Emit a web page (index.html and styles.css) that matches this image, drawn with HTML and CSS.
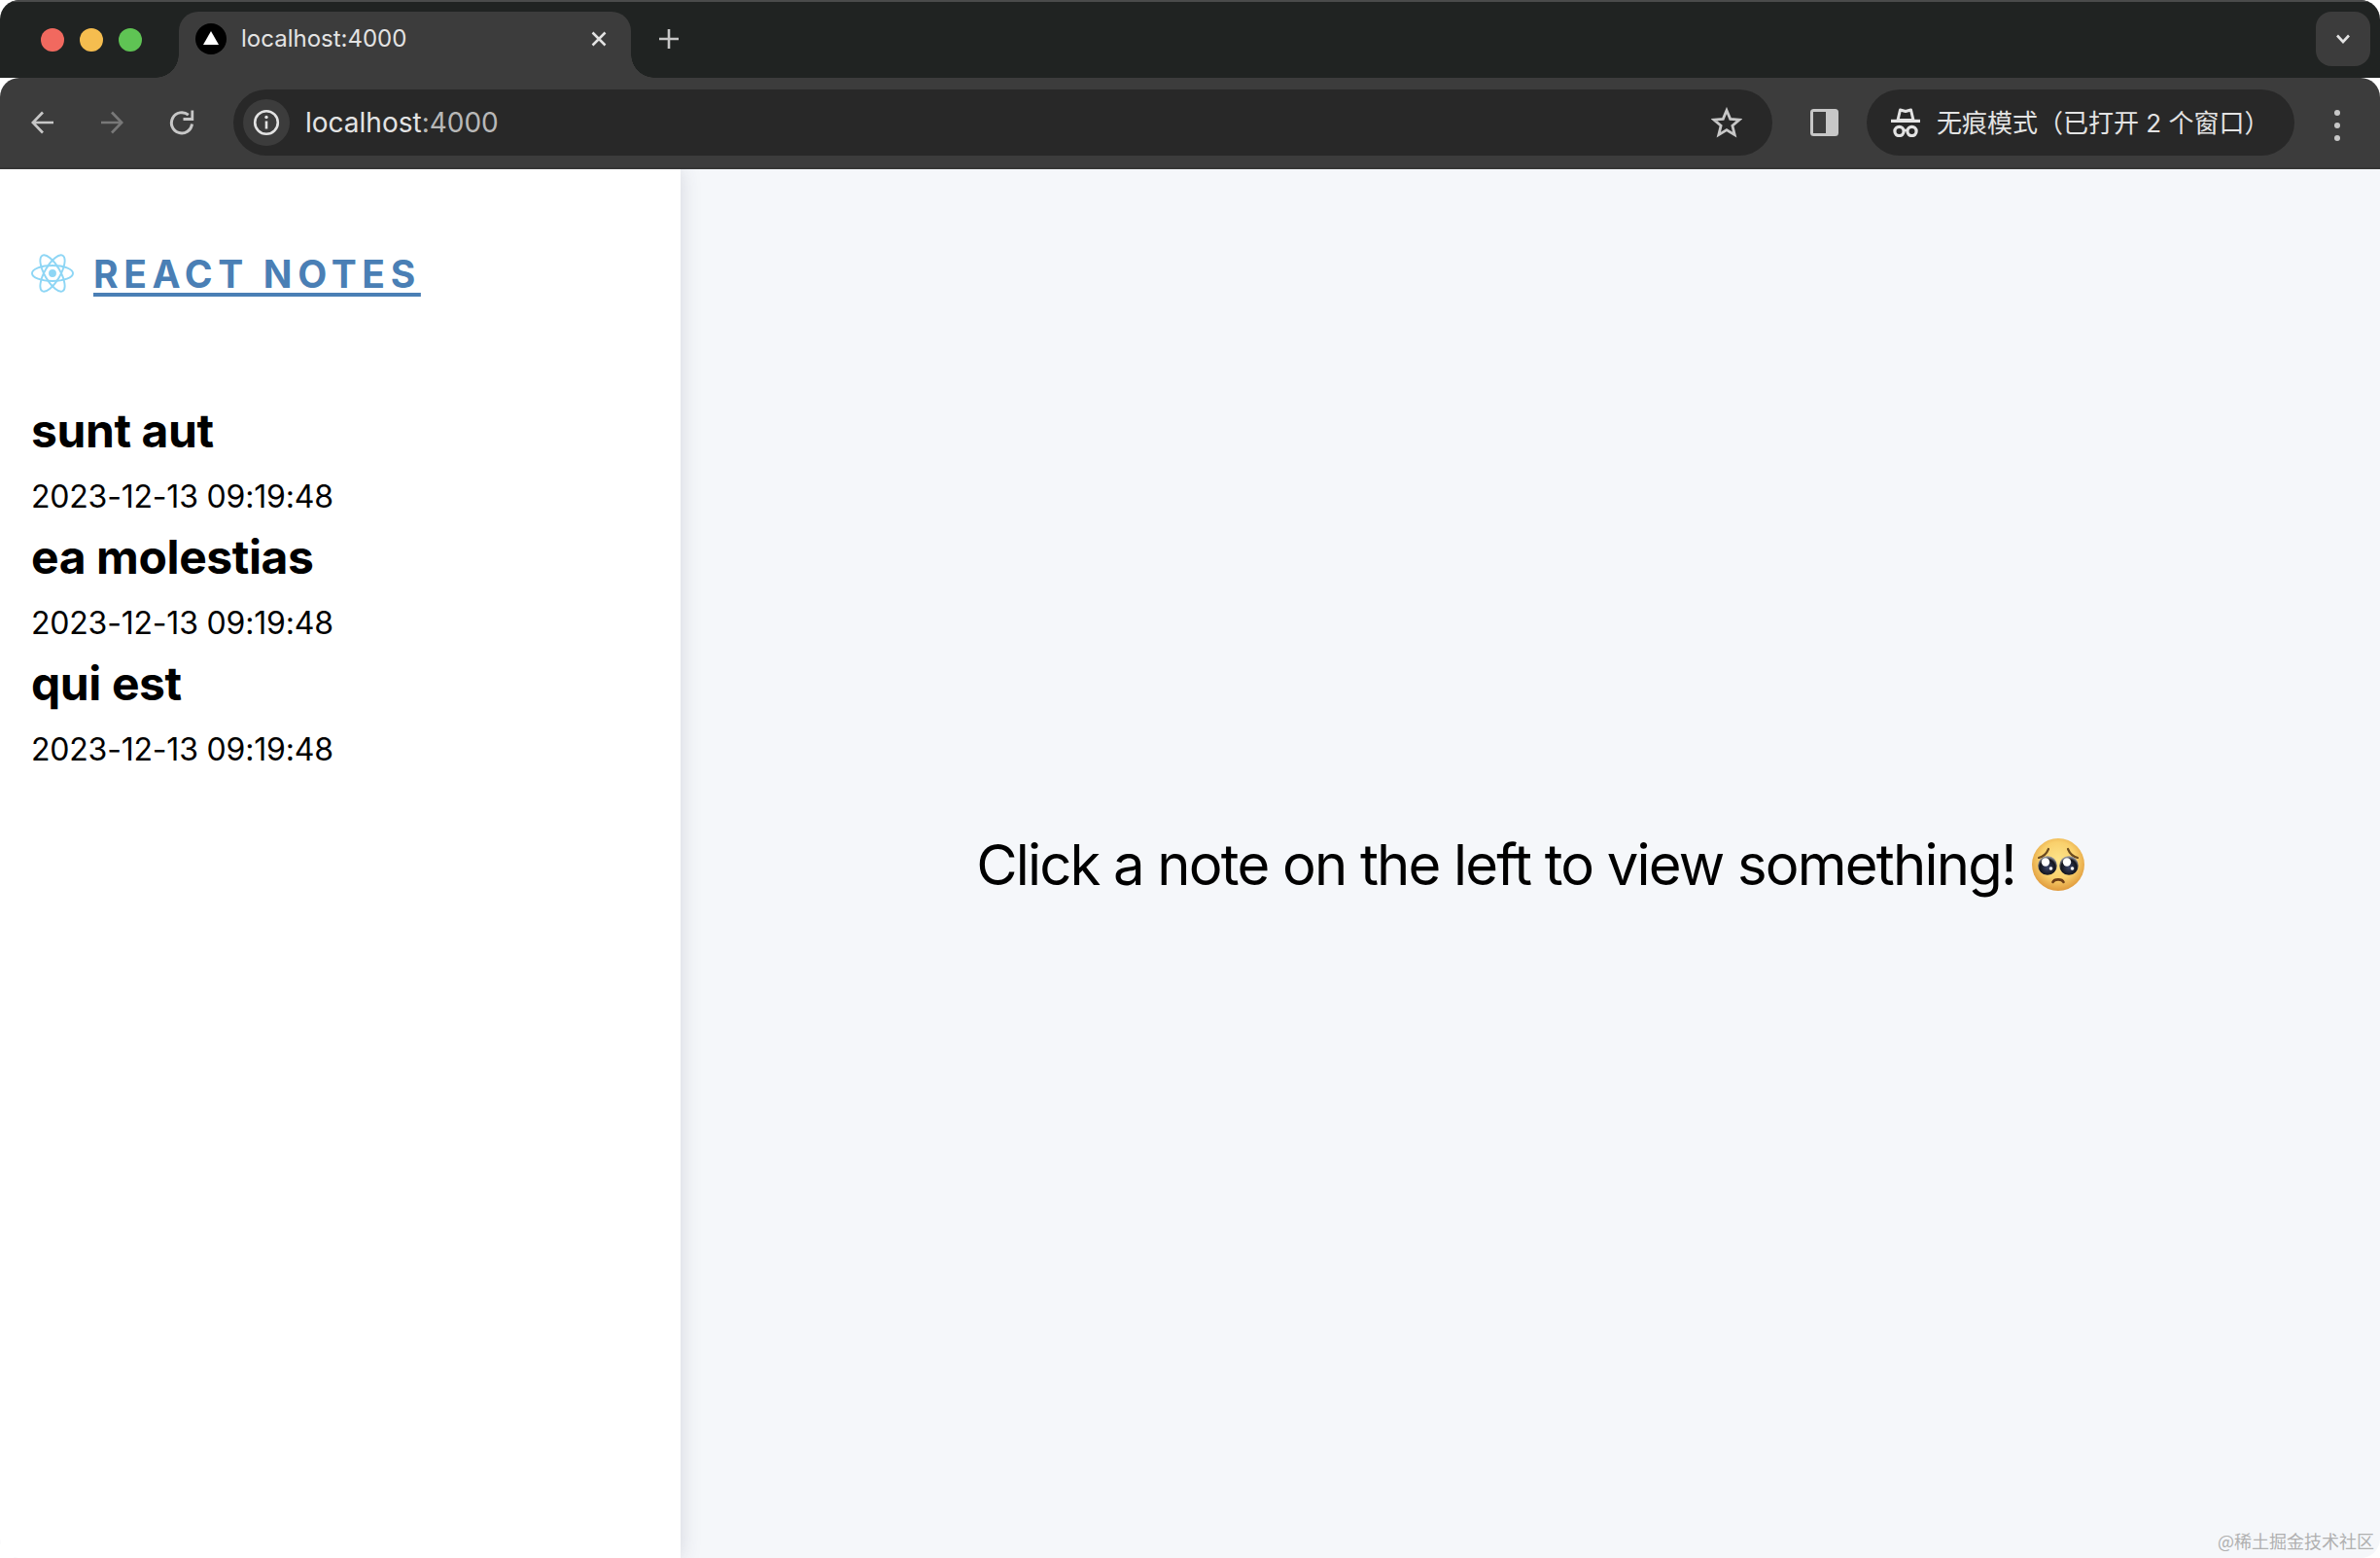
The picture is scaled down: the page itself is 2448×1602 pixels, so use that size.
FILE: index.html
```html
<!DOCTYPE html>
<html lang="en">
<head>
<meta charset="utf-8">
<title>React Notes</title>
<link rel="stylesheet" href="styles.css">
</head>
<body>
<div class="window">
  <header class="tabstrip">
    <div class="lights">
      <span class="light light-red"></span>
      <span class="light light-yellow"></span>
      <span class="light light-green"></span>
    </div>
    <div class="tab">
      <svg class="favicon" viewBox="0 0 32 32"><circle cx="16" cy="16" r="16" fill="#000"/><path d="M16 8 24 22H8Z" fill="#fff"/></svg>
      <span class="tab-title">localhost:4000</span>
      <svg class="tab-close" viewBox="0 0 16 16"><path d="M1.500 1.500 14.500 14.500M14.500 1.500 1.500 14.500" stroke="#e3e3e3" stroke-width="2.500" fill="none"/></svg>
    </div>
    <svg class="newtab" viewBox="0 0 20 20"><path d="M10 0V20M0 10H20" stroke="#c7c7c7" stroke-width="2.600" fill="none"/></svg>
    <div class="tabsearch">
      <svg class="chevron" viewBox="0 0 16 12"><path d="M2 2.500 8 9 14 2.500" stroke="#e3e3e3" stroke-width="2.600" fill="none"/></svg>
    </div>
  </header>
  <nav class="toolbar">
    <svg class="navicon" viewBox="0 0 24 24"><path d="M23 12H2M12 1.500 1.800 12 12 22.500" stroke="#c7c7c7" stroke-width="2.700" fill="none"/></svg>
    <svg class="navicon navicon-off" viewBox="0 0 24 24"><path d="M1 12H22M12 1.500 22.200 12 12 22.500" stroke="#787878" stroke-width="2.700" fill="none"/></svg>
    <svg class="navicon navicon-reload" viewBox="0 0 26 26"><path d="M23.500 14.500A10.600 10.600 0 1 1 19.800 5.200" stroke="#c7c7c7" stroke-width="3" fill="none"/><path d="M23.800 .500V9.500H14.500" stroke="#c7c7c7" stroke-width="2.800" fill="none"/></svg>
    <div class="omnibox">
      <span class="site-info">
        <svg class="info-icon" viewBox="0 0 28 28"><circle cx="14" cy="14" r="11.800" stroke="#e3e3e3" stroke-width="2.600" fill="none"/><path d="M14 12.500V20.500" stroke="#e3e3e3" stroke-width="2.600"/><circle cx="14" cy="8.500" r="1.700" fill="#e3e3e3"/></svg>
      </span>
      <span class="url">localhost<span class="url-port">:4000</span></span>
      <svg class="star" viewBox="0 0 32 32"><path d="M16 3.500 19.700 12.400 29.200 13.100 21.900 19.300 24.200 28.600 16 23.600 7.800 28.600 10.100 19.300 2.800 13.100 12.300 12.400Z" stroke="#c7c7c7" stroke-width="2.800" fill="none"/></svg>
    </div>
    <svg class="sidepanel" viewBox="0 0 29 28"><rect width="29" height="28" rx="3.500" fill="#c7c7c7"/><rect x="3" y="3" width="13" height="22" fill="#3c3c3c"/></svg>
    <div class="incognito">
      <svg class="hat" viewBox="0 0 30 30"><path d="M7 12.500 9.500 2 15 3.500 20.500 2 23 12.500Z" stroke="#e3e3e3" stroke-width="3" stroke-linejoin="round" fill="none"/><path d="M0 11.800H30V15H0Z" fill="#e3e3e3"/><circle cx="8.500" cy="24" r="4.600" stroke="#e3e3e3" stroke-width="3.200" fill="none"/><circle cx="21.500" cy="24" r="4.600" stroke="#e3e3e3" stroke-width="3.200" fill="none"/><path d="M12 23H18" stroke="#e3e3e3" stroke-width="2.400"/></svg>
      <span class="incognito-label">无痕模式（已打开 2 个窗口）</span>
    </div>
    <div class="menu"><i></i><i></i><i></i></div>
  </nav>
  <div class="app">
    <aside class="sidebar">
      <div class="brand">
        <svg class="logo" viewBox="-11.500 -10.230 23 20.460"><circle r="2.050" fill="#8ed6f5"/><g stroke="#8ed6f5" stroke-width="1" fill="none"><ellipse rx="11" ry="4.200"/><ellipse rx="11" ry="4.200" transform="rotate(60)"/><ellipse rx="11" ry="4.200" transform="rotate(120)"/></g></svg>
        <a class="brand-link" href="#">REACT NOTES</a>
      </div>
      <ul class="notes">
        <li class="note"><h2 class="note-title">sunt aut</h2><p class="note-date">2023-12-13 09:19:48</p></li>
        <li class="note"><h2 class="note-title">ea molestias</h2><p class="note-date">2023-12-13 09:19:48</p></li>
        <li class="note"><h2 class="note-title">qui est</h2><p class="note-date">2023-12-13 09:19:48</p></li>
      </ul>
    </aside>
    <main class="content">
      <p class="placeholder">Click a note on the left to view something!
        <svg class="emoji" viewBox="0 0 54 54">
          <defs>
            <radialGradient id="face" cx="50%" cy="42%" r="58%"><stop offset="0" stop-color="#fde58c"/><stop offset=".6" stop-color="#f9d06c"/><stop offset="1" stop-color="#e09a3c"/></radialGradient>
            <radialGradient id="eye" cx="50%" cy="60%" r="55%"><stop offset="0" stop-color="#3a4468"/><stop offset=".75" stop-color="#12141c"/><stop offset="1" stop-color="#8d8f98"/></radialGradient>
          </defs>
          <circle cx="27" cy="27" r="27" fill="url(#face)"/>
          <path d="M7 20C11 19 15 16 17 11M47 20C43 19 39 16 37 11" stroke="#6b4a1f" stroke-width="2.200" fill="none" stroke-linecap="round"/>
          <circle cx="16" cy="28" r="9.800" fill="url(#eye)"/>
          <circle cx="38" cy="28" r="9.800" fill="url(#eye)"/>
          <circle cx="14" cy="24.500" r="4.200" fill="#fff"/><circle cx="36" cy="24.500" r="4.200" fill="#fff"/>
          <circle cx="19.500" cy="31" r="1.800" fill="#fff"/><circle cx="41.500" cy="31" r="1.800" fill="#fff"/>
          <path d="M21.500 45C23 41.500 31 41.500 32.500 45" stroke="#6b3c16" stroke-width="2.600" fill="none" stroke-linecap="round"/>
        </svg>
      </p>
      <span class="watermark">@稀土掘金技术社区</span>
    </main>
  </div>
</div>
</body>
</html>
```

FILE: styles.css
```css
* { box-sizing: border-box; }
html, body { margin: 0; padding: 0; background: #fff; }
body { width: 2448px; height: 1602px; overflow: hidden; font-family: Inter, "Noto Sans CJK SC", sans-serif; }
.window { height: 1602px; display: flex; flex-direction: column; border-radius: 20px; overflow: hidden; }

/* Tab strip */
.tabstrip { height: 80px; flex: none; background: #202322; border-top: 2px solid #4a4b4b; padding-top: 10px; display: flex; align-items: flex-start; }
.lights { display: flex; gap: 16px; margin: 17px 0 0 42px; }
.light { width: 24px; height: 24px; border-radius: 50%; }
.light-red { background: #f1695f; }
.light-yellow { background: #f5bd4f; }
.light-green { background: #5fc454; }
.tab { position: relative; width: 465px; height: 68px; margin-left: 38px; background: #3c3c3c; border-radius: 20px 20px 0 0; display: flex; align-items: center; padding: 0 0 12px 17px; }
.tab::before, .tab::after { content: ""; position: absolute; bottom: 0; width: 24px; height: 24px; }
.tab::before { left: -24px; background: radial-gradient(circle at 0 0, #202322 23.500px, #3c3c3c 24px); }
.tab::after { right: -24px; background: radial-gradient(circle at 100% 0, #202322 23.500px, #3c3c3c 24px); }
.favicon { width: 32px; height: 32px; flex: none; }
.tab-title { margin-left: 15px; color: #e3e3e3; font-size: 24px; line-height: 32px; }
.tab-close { width: 16px; height: 16px; margin-left: auto; margin-right: 25px; }
.newtab { width: 20px; height: 20px; margin: 18px 0 0 29px; }
.tabsearch { width: 56px; height: 56px; margin: 0 10px 0 auto; background: #3c3c3c; border-radius: 16px; display: flex; align-items: center; justify-content: center; }
.chevron { width: 16px; height: 12px; }

/* Toolbar */
.toolbar { height: 94px; flex: none; background: #3c3c3c; border-radius: 20px 20px 0 0; border-bottom: 2px solid #363636; display: flex; align-items: flex-start; padding: 12px 0 0 32px; position: relative; z-index: 2; }
.navicon { width: 24px; height: 24px; flex: none; margin-top: 22px; margin-right: 47px; }
.navicon-off { margin-right: 47px; }
.navicon-reload { width: 26px; height: 26px; margin-top: 21px; margin-right: 40px; }
.omnibox { width: 1583px; height: 68px; background: #282828; border-radius: 34px; display: flex; align-items: center; padding: 0 31px 0 10px; }
.site-info { width: 48px; height: 48px; background: #3c3c3c; border-radius: 50%; display: flex; align-items: center; justify-content: center; flex: none; }
.info-icon { width: 28px; height: 28px; }
.url { margin-left: 16px; color: #e3e3e3; font-size: 28px; }
.url-port { color: #b8b8b8; }
.star { width: 32px; height: 32px; margin-left: auto; }
.sidepanel { width: 29px; height: 28px; flex: none; margin: 20px 29px 0 39px; }
.incognito { width: 440px; height: 68px; flex: none; background: #282828; border-radius: 34px; display: flex; align-items: center; padding-left: 25px; }
.hat { width: 30px; height: 30px; flex: none; }
.incognito-label { margin: 0 0 3px 17px; color: #e3e3e3; font-size: 26px; white-space: nowrap; }
.menu { display: flex; flex-direction: column; gap: 7px; margin: 21px 0 0 41px; }
.menu i { width: 6px; height: 6px; border-radius: 50%; background: #c7c7c7; display: block; }

/* App */
.app { flex: 1; display: flex; min-height: 0; }
.sidebar { width: 700px; flex: none; background: #fff; padding: 84px 32px 0; position: relative; z-index: 1; box-shadow: 0 0 20px rgba(60, 60, 90, .18); }
.brand { display: flex; align-items: center; }
.logo { width: 44px; height: 40px; flex: none; margin-top: -2px; }
.brand-link { margin-left: 20px; color: #4a7fb5; font-size: 39px; font-weight: 700; letter-spacing: 5.650px; text-underline-offset: 5px; text-decoration-thickness: 4px; line-height: 48px; }
.notes { list-style: none; margin: 107px 0 0; padding: 0; }
.note { height: 130px; }
.note-title { margin: 0; color: #000; font-size: 48px; font-weight: 750; line-height: 60px; letter-spacing: -.4px; }
.note-date { margin: 18px 0 0; color: #000; font-size: 32px; line-height: 40px; letter-spacing: -.2px; }
.content { flex: 1; position: relative; background: #f5f7fa; display: flex; align-items: center; justify-content: center; }
.placeholder { margin: 2px 0 0; color: #000; font-size: 58px; line-height: 70px; letter-spacing: -1.800px; display: flex; align-items: center; gap: 17px; white-space: nowrap; }
.emoji { width: 54px; height: 54px; flex: none; }
.watermark { position: absolute; right: 6px; bottom: 6px; color: #b0b0b0; font-size: 18px; line-height: 24px; font-family: "Noto Sans CJK SC", sans-serif; }
```
